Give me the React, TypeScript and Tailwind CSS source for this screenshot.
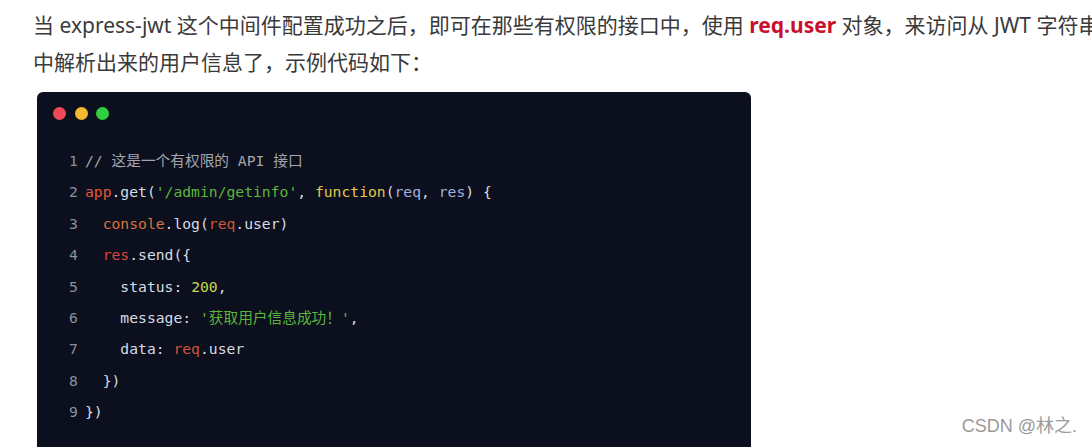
import React from 'react';

type Tok = [string, string];

const C = {
  plain: 'text-[#d6dce4]',
  num: 'text-[#c9d84c]',
  str: 'text-[#5cb63c]',
  kw: 'text-[#e2c94c]',
  app: 'text-[#e3573a]',
  obj: 'text-[#d9743f]',
  req: 'text-[#cf5533]',
  res: 'text-[#db463a]',
  param: 'text-[#a3afdd]',
  comment: 'text-[#a2a6ad]',
};

const lines: Tok[][] = [
  [['// 这是一个有权限的 API 接口', C.comment]],
  [
    ['app', C.app],
    ['.get(', C.plain],
    ["'/admin/getinfo'", C.str],
    [', ', C.plain],
    ['function', C.kw],
    ['(', C.plain],
    ['req', C.param],
    [', ', C.plain],
    ['res', C.param],
    [') {', C.plain],
  ],
  [
    ['  ', C.plain],
    ['console', C.obj],
    ['.log(', C.plain],
    ['req', C.req],
    ['.user)', C.plain],
  ],
  [
    ['  ', C.plain],
    ['res', C.res],
    ['.send({', C.plain],
  ],
  [
    ['    status: ', C.plain],
    ['200', C.num],
    [',', C.plain],
  ],
  [
    ['    message: ', C.plain],
    ["'获取用户信息成功！'", C.str],
    [',', C.plain],
  ],
  [
    ['    data: ', C.plain],
    ['req', C.req],
    ['.user', C.plain],
  ],
  [['  })', C.plain]],
  [['})', C.plain]],
];

function CodeBlock() {
  return (
    <div className="ml-[37px] mt-[11px] w-[714px] h-[380px] rounded-md bg-[#0c0f1e]">
      <div className="flex gap-[8.5px] pl-[16px] pt-[15px]">
        <span className="w-[13px] h-[13px] rounded-full bg-[#ee4a58]" />
        <span className="w-[13px] h-[13px] rounded-full bg-[#f4b92f]" />
        <span className="w-[13px] h-[13px] rounded-full bg-[#2fd040]" />
      </div>
      <div
        className="mt-[25px] pl-[32px] text-[14.7px] leading-[31.4px] whitespace-pre"
        style={{ fontFamily: '"DejaVu Sans Mono", "Noto Sans CJK SC", monospace' }}
      >
        {lines.map((toks, i) => (
          <div key={i} className="flex">
            <span className="w-[16px] text-[#8b919b]">{i + 1}</span>
            <span>
              {toks.map(([t, c], j) => (
                <span key={j} className={c}>
                  {t}
                </span>
              ))}
            </span>
          </div>
        ))}
      </div>
    </div>
  );
}

export default function App() {
  return (
    <div
      className="relative w-[1092px] h-[447px] overflow-hidden bg-white"
      style={{ fontFamily: '"Noto Sans", "Noto Sans CJK SC", sans-serif' }}
    >
      <div className="pl-[33px] pt-[7px] text-[21px] leading-[37px] text-[#3a3a3a] whitespace-nowrap">
        <p>
          当 express-jwt 这个中间件配置成功之后，即可在那些有权限的接口中，使用{' '}
          <strong className="font-bold text-[#c8102e]">req.user</strong> 对象，来访问从 JWT 字符串
        </p>
        <p>中解析出来的用户信息了，示例代码如下：</p>
      </div>
      <CodeBlock />
      <div
        className="absolute right-[15px] bottom-[7px] text-[18px] text-[#9a9a9a]"
        style={{ fontFamily: '"Liberation Sans", "Noto Sans CJK SC", sans-serif' }}
      >
        CSDN @林之.
      </div>
    </div>
  );
}
